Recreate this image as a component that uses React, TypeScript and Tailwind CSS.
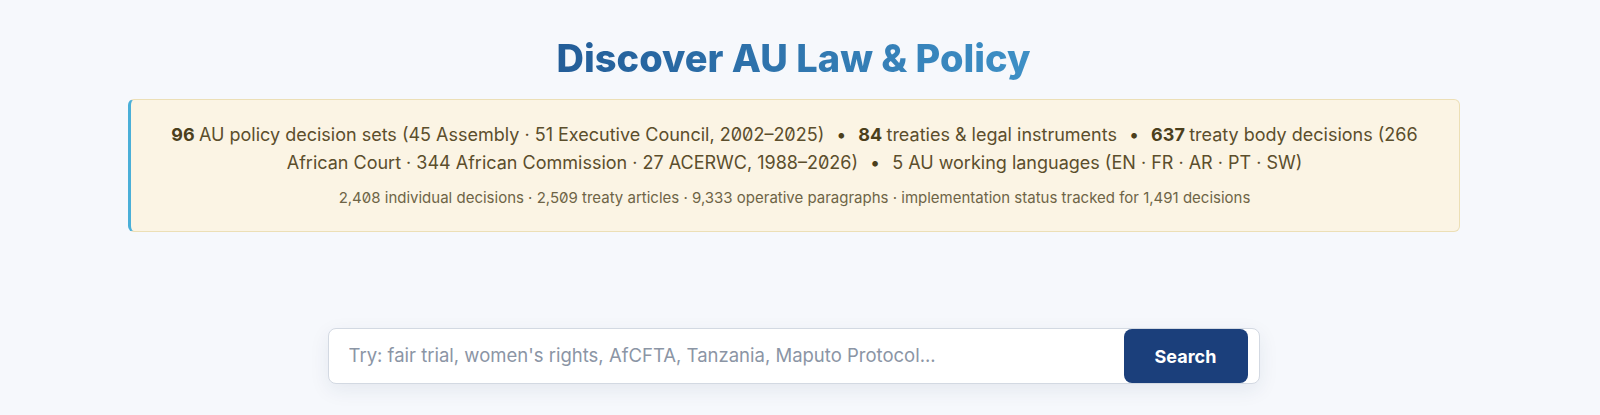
import { useState } from "react";

const stats = [
  { n: "96", text: "AU policy decision sets (45 Assembly · 51 Executive Council, 2002–2025)" },
  { n: "84", text: "treaties & legal instruments" },
  { n: "637", text: "treaty body decisions (266 African Court · 344 African Commission · 27 ACERWC, 1988–2026)" },
  { n: "", text: "5 AU working languages (EN · FR · AR · PT · SW)" },
];

export default function App() {
  const [query, setQuery] = useState("");

  return (
    <div className="min-h-screen bg-[#f6f8fc] pr-[13px] font-['Inter',sans-serif]">
      <main className="mx-auto max-w-[1332px] pt-[35px]">
        <h1 className="text-center text-[38px] leading-[46px] font-extrabold">
          <span className="bg-linear-to-r from-[#235d98] to-[#3e90c6] bg-clip-text text-transparent">
            Discover AU Law &amp; Policy
          </span>
        </h1>

        {/* Coverage banner */}
        <section className="mt-[18px] rounded-md border border-[#ecdfb6] border-l-[3px] border-l-[#4aafd8] bg-[#fbf4e4] px-[40px] pt-[21px] pb-[23px] text-center">
          <p className="text-[18px] leading-[28px] text-[#5b4e2c] slashed-zero">
            {stats.map((s, i) => (
              <span key={i}>
                {i > 0 && <span className="mx-[12px] text-[#4b3f1c]">•</span>}
                {s.n && <b className="font-bold text-[#4b3f1c]">{s.n} </b>}
                {s.text}
              </span>
            ))}
          </p>
          <p className="mt-[11px] text-[15px] leading-[20px] text-[#6e6446] slashed-zero">
            2,408 individual decisions · 2,509 treaty articles · 9,333 operative paragraphs · implementation status tracked for 1,491 decisions
          </p>
        </section>

        {/* Search */}
        <form
          onSubmit={(e) => e.preventDefault()}
          className="mx-auto mt-24 flex h-[56px] w-[932px] rounded-lg border border-[#d3d9e2] bg-white shadow-[0_6px_20px_rgba(30,50,90,0.08)]"
        >
          <input
            value={query}
            onChange={(e) => setQuery(e.target.value)}
            placeholder="Try: fair trial, women's rights, AfCFTA, Tanzania, Maputo Protocol..."
            className="flex-1 rounded-l-lg bg-transparent px-5 text-[18.5px] text-slate-700 outline-none placeholder:text-[#8b95a5]"
          />
          <button
            type="submit"
            className="mr-[11px] w-[124px] rounded-lg bg-[#1b3f7b] text-[18px] font-bold text-white"
          >
            Search
          </button>
        </form>
      </main>
    </div>
  );
}
